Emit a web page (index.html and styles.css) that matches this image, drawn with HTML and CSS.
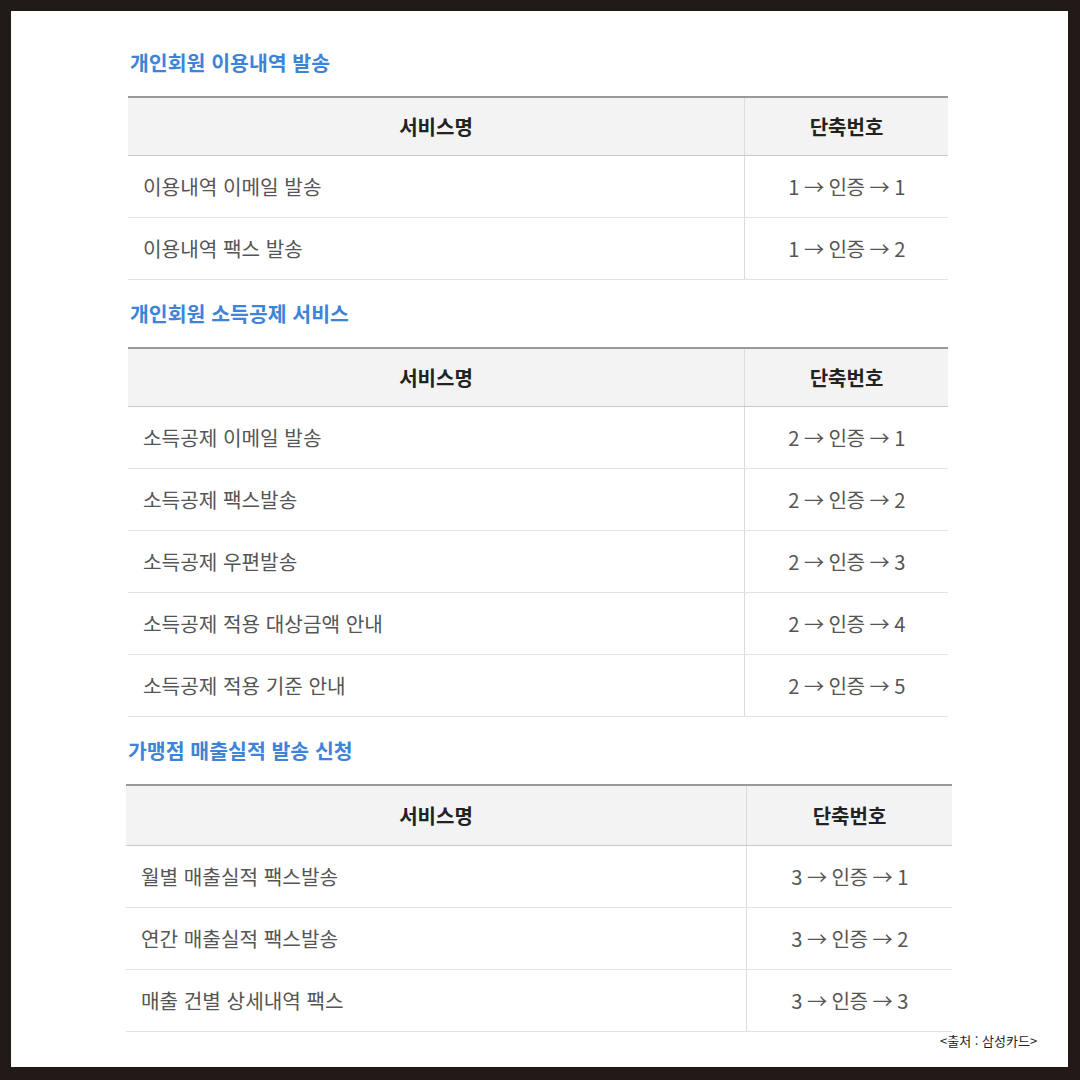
FILE: index.html
```html
<!DOCTYPE html>
<html lang="ko">
<head>
<meta charset="utf-8">
<link rel="stylesheet" href="styles.css">
</head>
<body>
<div class="frame">
  <section class="sec">
    <h2 class="title">개인회원 이용내역 발송</h2>
    <table class="tbl">
      <thead><tr><th class="c1">서비스명</th><th class="c2">단축번호</th></tr></thead>
      <tbody>
        <tr><td class="name">이용내역 이메일 발송</td><td class="code">1 → 인증 → 1</td></tr>
        <tr><td class="name">이용내역 팩스 발송</td><td class="code">1 → 인증 → 2</td></tr>
      </tbody>
    </table>
  </section>
  <section class="sec">
    <h2 class="title">개인회원 소득공제 서비스</h2>
    <table class="tbl">
      <thead><tr><th class="c1">서비스명</th><th class="c2">단축번호</th></tr></thead>
      <tbody>
        <tr><td class="name">소득공제 이메일 발송</td><td class="code">2 → 인증 → 1</td></tr>
        <tr><td class="name">소득공제 팩스발송</td><td class="code">2 → 인증 → 2</td></tr>
        <tr><td class="name">소득공제 우편발송</td><td class="code">2 → 인증 → 3</td></tr>
        <tr><td class="name">소득공제 적용 대상금액 안내</td><td class="code">2 → 인증 → 4</td></tr>
        <tr><td class="name">소득공제 적용 기준 안내</td><td class="code">2 → 인증 → 5</td></tr>
      </tbody>
    </table>
  </section>
  <section class="sec sec-wide">
    <h2 class="title">가맹점 매출실적 발송 신청</h2>
    <table class="tbl">
      <thead><tr><th class="c1">서비스명</th><th class="c2">단축번호</th></tr></thead>
      <tbody>
        <tr><td class="name">월별 매출실적 팩스발송</td><td class="code">3 → 인증 → 1</td></tr>
        <tr><td class="name">연간 매출실적 팩스발송</td><td class="code">3 → 인증 → 2</td></tr>
        <tr><td class="name">매출 건별 상세내역 팩스</td><td class="code">3 → 인증 → 3</td></tr>
      </tbody>
    </table>
  </section>
  <p class="source">&lt;출처 : 삼성카드&gt;</p>
</div>
</body>
</html>
```

FILE: styles.css
```css
html, body {
  margin: 0;
  padding: 0;
}
body {
  background: #221a17;
  width: 1080px;
  height: 1080px;
  box-sizing: border-box;
  padding: 11px 12px 13px 11px;
  font-family: "Noto Sans CJK KR", "Noto Sans", sans-serif;
}
.frame {
  background: #fff;
  height: 100%;
  box-sizing: border-box;
  padding: 37px 0 0 117px;
  display: flex;
  flex-direction: column;
}
.sec {
  width: 820px;
  display: flex;
  flex-direction: column;
}
.sec + .sec {
  margin-top: 19px;
}
.sec-wide {
  width: 826px;
  margin-left: -2px;
}
.title {
  margin: 0 0 20px 2px;
  font-size: 20.5px;
  line-height: 28px;
  font-weight: 700;
  color: #3d84d9;
  letter-spacing: 0;
}
.tbl {
  width: 100%;
  border-collapse: collapse;
  table-layout: fixed;
}
.tbl th {
  background: #f3f3f3;
  border-top: 2px solid #9a9a9a;
  border-bottom: 1px solid #c9c9c9;
  height: 57px;
  padding: 0;
  font-size: 20px;
  font-weight: 700;
  color: #222;
  text-align: center;
}
.sec-wide .tbl th {
  height: 59px;
}
.tbl th.c1 { width: 616px; }
.sec-wide .tbl th.c1 { width: 620px; }
.tbl th.c1, .tbl td.name {
  border-right: 1px solid #dcdcdc;
}
.tbl td {
  height: 61px;
  padding: 0;
  border-bottom: 1px solid #e3e3e3;
  font-size: 20.2px;
  color: #555;
}
.tbl td.name {
  padding-left: 15px;
  text-align: left;
}
.tbl td.code {
  text-align: center;
  letter-spacing: -0.6px;
}
.source {
  margin: 0 0 0 812px;
  font-size: 13px;
  line-height: 18px;
  color: #222;
}
```
